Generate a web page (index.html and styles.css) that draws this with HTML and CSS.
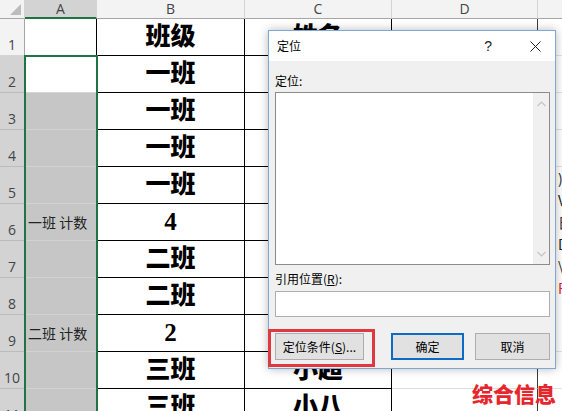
FILE: index.html
```html
<!DOCTYPE html>
<html lang="zh-CN">
<head>
<meta charset="utf-8">
<title>定位</title>
<link rel="stylesheet" href="styles.css">
</head>
<body>
<div class="sheet">
  <div class="corner"><span class="tri"></span></div>
  <div class="ch sel">A</div><div class="ch">B</div><div class="ch">C</div><div class="ch">D</div><div class="ch"></div>

  <div class="rh">1</div><div class="a"></div><div class="b">班级</div><div class="c">姓名</div><div class="d"></div><div class="e"></div>
  <div class="rh sel">2</div><div class="a"></div><div class="b">一班</div><div class="c"></div><div class="d"></div><div class="e"></div>
  <div class="rh sel">3</div><div class="a g"></div><div class="b">一班</div><div class="c"></div><div class="d"></div><div class="e"></div>
  <div class="rh sel">4</div><div class="a g"></div><div class="b">一班</div><div class="c"></div><div class="d"></div><div class="e"></div>
  <div class="rh sel">5</div><div class="a g"></div><div class="b">一班</div><div class="c"></div><div class="d"></div><div class="e tall"><span>)</span><span>V</span><span>日</span><span>D</span><span>\</span><span class="red">F</span></div>
  <div class="rh sel">6</div><div class="a g">一班 计数</div><div class="b num">4</div><div class="c"></div><div class="d"></div>
  <div class="rh sel">7</div><div class="a g"></div><div class="b">二班</div><div class="c"></div><div class="d"></div>
  <div class="rh sel">8</div><div class="a g"></div><div class="b">二班</div><div class="c"></div><div class="d"></div>
  <div class="rh sel">9</div><div class="a g">二班 计数</div><div class="b num">2</div><div class="c"></div><div class="d"></div><div class="e"></div>
  <div class="rh sel">10</div><div class="a g"></div><div class="b">三班</div><div class="c">小超</div><div class="d"></div><div class="e"></div>
  <div class="rh sel">11</div><div class="a g"></div><div class="b">三班</div><div class="c">小八</div><div class="d"></div><div class="e"></div>
</div>

<div class="selbox"></div>

<div class="dlg">
  <div class="ttl">
    <span class="tt">定位</span>
    <span class="q">?</span>
    <span class="x"><svg width="11" height="11" viewBox="0 0 11 11"><path d="M0.5 0.5L10.5 10.5M10.5 0.5L0.5 10.5" stroke="#222" stroke-width="1" fill="none"/></svg></span>
  </div>
  <div class="bd">
    <div class="lbl">定位:</div>
    <div class="list">
      <div class="sb">
        <svg width="9" height="6" viewBox="0 0 9 6"><path d="M0.5 5L4.5 1L8.5 5" stroke="#c4c4c4" stroke-width="1.2" fill="none"/></svg>
        <svg width="9" height="6" viewBox="0 0 9 6"><path d="M0.5 1L4.5 5L8.5 1" stroke="#c4c4c4" stroke-width="1.2" fill="none"/></svg>
      </div>
    </div>
    <div class="lbl l2">引用位置(<u>R</u>):</div>
    <div class="inp"></div>
    <div class="btns">
      <div class="btn b1">定位条件(<u>S</u>)...</div>
      <div class="btn b2">确定</div>
      <div class="btn b3">取消</div>
    </div>
  </div>
  <div class="redbox"></div>
</div>

<div class="mark">综合信息</div>
</body>
</html>
```

FILE: styles.css
```css
* { box-sizing: border-box; margin: 0; padding: 0; }
html, body { width: 562px; height: 411px; overflow: hidden; background: #fff; }
body { position: relative; font-family: "Noto Sans CJK SC", sans-serif; }

.sheet {
  display: grid;
  grid-template-columns: 25px 72px 148px 147px 146px 40px;
  grid-template-rows: 19px repeat(11, 37px);
  height: 411px;
  overflow: hidden;
}

.corner {
  position: relative;
  background: #f3f3f3;
  border-right: 1px solid #d4d4d4;
  border-bottom: 1px solid #a6a6a6;
}
.tri {
  position: absolute;
  right: 3px;
  bottom: 3px;
  width: 0;
  height: 0;
  border-left: 11px solid transparent;
  border-bottom: 11px solid #bcbcbc;
}

.ch {
  display: flex;
  align-items: center;
  justify-content: center;
  background: #f3f3f3;
  border-right: 1px solid #d4d4d4;
  border-bottom: 1px solid #a6a6a6;
  font: 14px/16px "Open Sans", "Liberation Sans", sans-serif;
  color: #444;
}
.ch.sel { background: #d3d3d3; border-bottom: 2px solid #217346; }

.rh {
  display: flex;
  align-items: flex-end;
  justify-content: center;
  padding-bottom: 2px;
  background: #f3f3f3;
  border-right: 1px solid #a6a6a6;
  border-bottom: 1px solid #d4d4d4;
  font: 14px/16px "Open Sans", "Liberation Sans", sans-serif;
  color: #444;
}
.rh.sel { background: #d3d3d3; border-bottom-color: #bcbcbc; }

.a {
  display: flex;
  align-items: center;
  padding-left: 3px;
  border-right: 1px solid #000;
  border-bottom: 1px solid #d6d6d6;
  font-size: 14px;
  color: #222;
  white-space: nowrap;
}
.a.g { background: #c6c6c6; border-bottom-color: #d2d2d2; }

.b, .c {
  display: flex;
  align-items: center;
  justify-content: center;
  border-right: 1px solid #000;
  border-bottom: 1px solid #000;
  font: 900 25px/30px "Liberation Serif", "Noto Sans CJK SC", serif;
  color: #000;
}

.d {
  border-right: 1px solid #3a3a3a;
  border-bottom: 1px solid #dcdcdc;
}
.e { border-bottom: 1px solid #e2e2e2; }
.e.tall {
  grid-row: span 4;
  display: flex;
  flex-direction: column;
  padding-left: 20px;
  border-bottom: none;
  font: 14px/22px "Noto Sans CJK SC", sans-serif;
  color: #222;
  overflow: hidden;
}
.e.tall .red { color: #e0252b; }

.selbox {
  position: absolute;
  left: 24px;
  top: 55px;
  width: 74px;
  height: 356px;
  border: 2px solid #217346;
  border-bottom: none;
}

.dlg {
  position: absolute;
  left: 268px;
  top: 30px;
  width: 288px;
  height: 339px;
  background: #f0f0f0;
  border: 1px solid #7ea7d6;
  box-shadow: 0 0 9px rgba(0, 0, 0, 0.28);
  font-size: 12px;
  color: #000;
}
.ttl {
  display: flex;
  align-items: center;
  height: 30px;
  padding-left: 8px;
  background: #fff;
}
.tt { flex: 1; font-size: 12px; line-height: 16px; }
.q { margin-right: 38px; font: 14px/16px "Liberation Sans", sans-serif; color: #222; }
.x { display: flex; margin-right: 14px; }

.bd { padding: 12px 5px 0 6px; }
.lbl { height: 16px; font-size: 12px; line-height: 16px; }
.list {
  display: flex;
  justify-content: flex-end;
  margin-top: 3px;
  height: 173px;
  background: #fff;
  border: 1px solid #8c8c8c;
}
.sb {
  display: flex;
  flex-direction: column;
  justify-content: space-between;
  align-items: center;
  width: 16px;
  padding: 8px 0 7px;
  background: #f0f0f0;
}
.l2 { margin-top: 6px; }
.inp {
  margin-top: 4px;
  height: 26px;
  background: #fff;
  border: 1px solid #adadad;
}
.btns { display: flex; margin-top: 16px; }
.btn {
  display: flex;
  align-items: center;
  justify-content: center;
  height: 27px;
  background: #e1e1e1;
  border: 1px solid #adadad;
  font-size: 12px;
}
.b1 { width: 89px; }
.b2 { width: 73px; margin-left: 27px; border: 2px solid #0a6cc4; }
.b3 { width: 75px; margin-left: 11px; }

.redbox {
  position: absolute;
  left: -1px;
  top: 298px;
  width: 107px;
  height: 38px;
  border: 3px solid #dc3940;
}

.mark {
  position: absolute;
  left: 472px;
  top: 381px;
  font: 900 21px/24px "Noto Sans CJK SC", sans-serif;
  color: #e6262d;
}
```
